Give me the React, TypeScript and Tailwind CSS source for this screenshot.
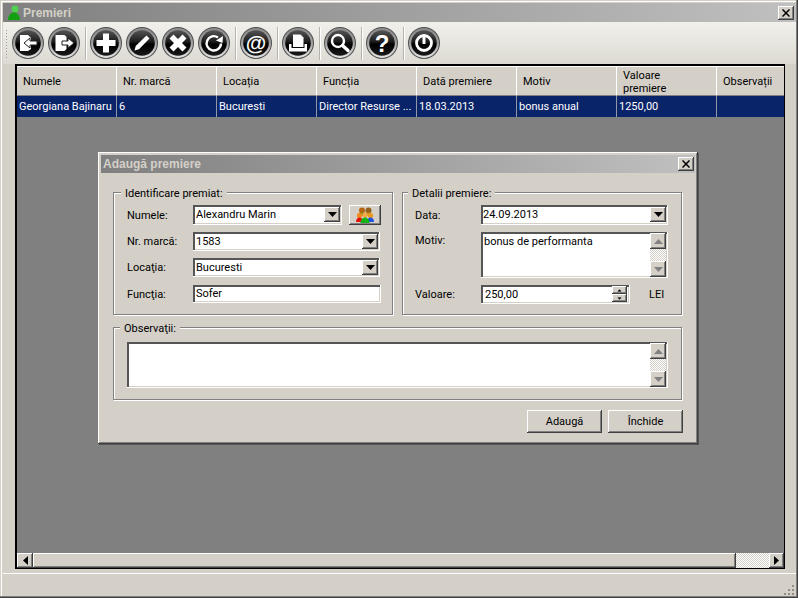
import { ReactNode } from 'react';

const columns = [
  { title: 'Numele', value: 'Georgiana Bajinaru' },
  { title: 'Nr. marcă', value: '6' },
  { title: 'Locația', value: 'Bucuresti' },
  { title: 'Funcția', value: 'Director Resurse ...' },
  { title: 'Dată premiere', value: '18.03.2013' },
  { title: 'Motiv', value: 'bonus anual' },
  { title: 'Valoare premiere', value: '1250,00' },
  { title: 'Observații', value: '' },
];

const raised = 'bg-[#d4d0c8] shadow-[inset_-1px_-1px_#404040,inset_1px_1px_#ffffff,inset_-2px_-2px_#808080]';
const sunken = 'bg-white shadow-[inset_2px_2px_#555555,inset_-1px_-1px_#d4d0c8] border-r border-b border-white';
const checker = 'bg-[conic-gradient(#d4d0c8_25%,#ffffff_0_50%,#d4d0c8_0_75%,#ffffff_0)] bg-[length:2px_2px]';

function ToolButton({ children, id }: { children: ReactNode; id: string }) {
  return (
    <svg width="32" height="32" viewBox="0 0 32 32" className="shrink-0">
      <defs>
        <linearGradient id={`ring-${id}`} x1="0" y1="0" x2="0" y2="1">
          <stop offset="0" stopColor="#8a8a8a" />
          <stop offset="0.5" stopColor="#a0a0a0" />
          <stop offset="1" stopColor="#e6e6e6" />
        </linearGradient>
        <linearGradient id={`disc-${id}`} x1="0" y1="0" x2="0" y2="1">
          <stop offset="0" stopColor="#555555" />
          <stop offset="0.45" stopColor="#1c1c1c" />
          <stop offset="0.55" stopColor="#000000" />
          <stop offset="1" stopColor="#1a1a1a" />
        </linearGradient>
      </defs>
      <circle cx="16" cy="16" r="16" fill="#505050" />
      <circle cx="16" cy="16" r="15" fill={`url(#ring-${id})`} />
      <circle cx="16" cy="16" r="12.800" fill={`url(#disc-${id})`} />
      {children}
    </svg>
  );
}

const Sep = () => <div className="ml-[1px] mr-[-1px] h-[33px] w-[2px] shrink-0 border-l border-r border-l-[#b5b3ab] border-r-white" />;

function Toolbar() {
  return (
    <div className="flex h-[42px] shrink-0 items-center gap-[4px] bg-gradient-to-b from-[#f1f0eb] to-[#dcdad2] pl-[2px]">
      <div className="h-[29px] w-[3px] bg-[radial-gradient(circle,#9a9890_1px,transparent_1px)] bg-[length:3px_3px]" />
      <ToolButton id="a">
        <path d="M8 8h8l3 3v11l-3 2H8z" fill="#fff" />
        <path d="M12 16l6-5v3h7v4h-7v3z" fill="#fff" stroke="#222" strokeWidth="1" />
      </ToolButton>
      <ToolButton id="b">
        <path d="M7.500 8h9l2 2v12l-2 2h-9z" fill="#fff" />
        <path d="M26 16l-6-5v3h-6v4h6v3z" fill="#fff" stroke="#222" strokeWidth="1" />
      </ToolButton>
      <Sep />
      <ToolButton id="c">
        <path d="M13 6.500h6V13h6.500v6H19v6.500h-6V19H6.500v-6H13z" fill="#fff" />
      </ToolButton>
      <ToolButton id="d">
        <path d="M8.500 23.500l1.200-4.500L20.500 8.500l3 3L13 22.300z" fill="#fff" />
      </ToolButton>
      <ToolButton id="e">
        <path d="M11.500 7.500l4.500 4.500 4.500-4.500 4 4-4.500 4.500 4.500 4.500-4 4-4.500-4.500-4.500 4.500-4-4 4.500-4.500-4.500-4.500z" fill="#fff" />
      </ToolButton>
      <ToolButton id="f">
        <path d="M23 16.500a7.200 7.200 0 1 1-3-6" fill="none" stroke="#fff" strokeWidth="2.400" />
        <path d="M25 9l-.5 7-6.500-2.500z" fill="#fff" />
      </ToolButton>
      <Sep />
      <ToolButton id="g">
        <text x="16" y="22.500" textAnchor="middle" fontFamily="'Liberation Sans', sans-serif" fontSize="21" fontWeight="700" fill="#fff">@</text>
      </ToolButton>
      <Sep />
      <ToolButton id="h">
        <path d="M11 7.500h7.500l3 3V20H11z" fill="#fff" />
        <path d="M7 17h2.500v4h13v-4H25v7.500H7z" fill="#fff" />
      </ToolButton>
      <Sep />
      <ToolButton id="i">
        <circle cx="14" cy="14" r="6" fill="none" stroke="#fff" strokeWidth="2.400" />
        <path d="M18.500 18.500l5.500 5" stroke="#fff" strokeWidth="3.400" strokeLinecap="round" />
      </ToolButton>
      <Sep />
      <ToolButton id="j">
        <text x="16" y="24.500" textAnchor="middle" fontFamily="'Liberation Sans', sans-serif" fontSize="24" fontWeight="700" fill="#fff">?</text>
      </ToolButton>
      <Sep />
      <ToolButton id="k">
        <circle cx="16" cy="16" r="7.500" fill="none" stroke="#fff" strokeWidth="2.800" />
        <path d="M16 10v7" stroke="#fff" strokeWidth="3" />
      </ToolButton>
    </div>
  );
}

function Arrow({ dir, color = 'black' }: { dir: 'up' | 'down' | 'left' | 'right'; color?: string }) {
  const points = { up: '0,5 9,5 4.500,0', down: '0,0 9,0 4.500,5', left: '5,0 5,9 0,4.500', right: '0,0 0,9 5,4.500' }[dir];
  const vertical = dir === 'up' || dir === 'down';
  return (
    <svg width={vertical ? 9 : 5} height={vertical ? 5 : 9}>
      <polygon points={points} fill={color} />
    </svg>
  );
}

function ArrowBtn({ dir, color, className }: { dir: 'up' | 'down' | 'left' | 'right'; color?: string; className: string }) {
  return (
    <div className={`flex shrink-0 items-center justify-center ${raised} ${className}`}>
      <Arrow dir={dir} color={color} />
    </div>
  );
}

function Close() {
  return (
    <div className={`flex h-[14px] w-[16px] items-center justify-center ${raised}`}>
      <svg width="8" height="8" viewBox="0 0 8 8">
        <path d="M0.500 0.500l7 7M7.500 0.500l-7 7" stroke="black" strokeWidth="1.500" />
      </svg>
    </div>
  );
}

function Combo({ value, className }: { value: string; className: string }) {
  return (
    <div className={`flex items-center justify-between pr-[1px] ${sunken} ${className}`}>
      <span>{value}</span>
      <ArrowBtn dir="down" className="h-[15px] w-[16px]" />
    </div>
  );
}

function Group({ title, className, legend, children }: { title: string; className: string; legend: string; children: ReactNode }) {
  return (
    <div className={`relative border border-[#808080] shadow-[1px_1px_#ffffff,inset_1px_1px_#ffffff] ${className}`}>
      <span className={`absolute top-[-6px] bg-[#d4d0c8] px-[4px] leading-[13px] ${legend}`}>{title}</span>
      {children}
    </div>
  );
}

function VScroll() {
  return (
    <div className="flex w-[16px] shrink-0 flex-col">
      <ArrowBtn dir="up" color="#808080" className="h-[16px]" />
      <div className={`flex-1 ${checker}`} />
      <ArrowBtn dir="down" color="#808080" className="h-[16px]" />
    </div>
  );
}

function Dialog() {
  return (
    <div className="absolute left-[98px] top-[152px] flex h-[292px] w-[600px] flex-col bg-[#d4d0c8] p-[3px] shadow-[inset_-1px_-1px_#404040,inset_1px_1px_#ffffff,inset_-2px_-2px_#808080,1px_1px_#555555]">
      <div className="flex h-[18px] shrink-0 items-center justify-between bg-gradient-to-r from-[#808080] to-[#c0c0c0] pl-[2px] pr-[1px]">
        <span className="font-['Liberation_Sans',sans-serif] text-[12px] font-bold text-[#d4d0c8]">Adaugă premiere</span>
        <Close />
      </div>
      <div className="mt-[19px] flex gap-[9px] pl-[12px]">
        <Group title="Identificare premiat:" legend="left-[7px]" className="h-[123px] w-[280px] pl-[13px] pt-[12px]">
          <div className="flex flex-col gap-[7px]">
            <div className="flex h-[20px] items-center">
              <span className="w-[66px]">Numele:</span>
              <Combo value="Alexandru Marin" className="h-[20px] w-[149px] pl-[3px]" />
              <div className={`ml-[7px] flex h-[20px] w-[32px] items-center justify-center ${raised}`}>
                <svg width="18" height="16" viewBox="0 0 18 16">
                  <circle cx="6" cy="3.500" r="3" fill="#b8640f" />
                  <circle cx="12.500" cy="3.500" r="3" fill="#96601c" />
                  <path d="M2 9c0-3 2-3.500 4-3.500S10 6 10 9z" fill="#7c9a1e" />
                  <path d="M9 9c0-3 1.500-3.500 3.500-3.500S16 6 16 9z" fill="#c89318" />
                  <circle cx="3.500" cy="8.500" r="2.600" fill="#f08a1c" />
                  <circle cx="14.500" cy="8.500" r="2.600" fill="#e8981c" />
                  <circle cx="9" cy="8" r="2.600" fill="#f6a848" />
                  <path d="M0 15c0-3 1.500-4.500 3.500-4.500S7 12 7 15z" fill="#e3100c" />
                  <path d="M11 15c0-3 1.500-4.500 3.500-4.500S18 12 18 15z" fill="#1f52e0" />
                  <path d="M4.500 16c0-3.500 2.500-5.500 4.500-5.500s4.500 2 4.500 5.500z" fill="#14b414" />
                </svg>
              </div>
            </div>
            <div className="flex h-[19px] items-center">
              <span className="w-[66px]">Nr. marcă:</span>
              <Combo value="1583" className="h-[19px] w-[187px] pl-[3px]" />
            </div>
            <div className="flex h-[19px] items-center">
              <span className="w-[66px]">Locaţia:</span>
              <Combo value="Bucuresti" className="h-[19px] w-[187px] pl-[3px]" />
            </div>
            <div className="mt-[1px] flex h-[18px] items-center">
              <span className="w-[66px]">Funcţia:</span>
              <div className={`flex h-[18px] w-[188px] items-center pl-[3px] ${sunken}`}>Sofer</div>
            </div>
          </div>
        </Group>
        <Group title="Detalii premiere:" legend="left-[5px]" className="h-[123px] w-[280px] pl-[12px] pt-[12px]">
          <div className="flex flex-col gap-[7px]">
            <div className="flex h-[20px] items-center">
              <span className="w-[66px]">Data:</span>
              <Combo value="24.09.2013" className="h-[20px] w-[187px] pl-[2px]" />
            </div>
            <div className="flex h-[46px]">
              <span className="w-[66px] pt-[3px]">Motiv:</span>
              <div className={`flex w-[187px] justify-between pl-[3px] pr-[1px] pt-[1px] ${sunken}`}>
                <span className="pt-[3px]">bonus de performanta</span>
                <VScroll />
              </div>
            </div>
            <div className="flex h-[19px] items-center">
              <span className="w-[66px]">Valoare:</span>
              <div className={`flex h-[19px] w-[149px] items-center justify-between pl-[4px] pr-[2px] ${sunken}`}>
                <span className="pt-[1px]">250,00</span>
                <div className="flex w-[15px] flex-col">
                  <ArrowBtn dir="up" className="h-[8px] [&_svg]:scale-50" />
                  <ArrowBtn dir="down" className="h-[8px] [&_svg]:scale-50" />
                </div>
              </div>
              <span className="ml-[19px]">LEI</span>
            </div>
          </div>
        </Group>
      </div>
      <div className="ml-[12px] mt-[12px]">
        <Group title="Observaţii:" legend="left-[6px]" className="h-[73px] w-[569px] pl-[13px] pt-[14px]">
          <div className={`flex h-[46px] w-[541px] justify-end pr-[1px] pt-[1px] ${sunken}`}>
            <VScroll />
          </div>
        </Group>
      </div>
      <div className="ml-[426px] mt-[10px] flex gap-[6px]">
        <div className={`flex h-[23px] w-[75px] items-center justify-center ${raised}`}>Adaugă</div>
        <div className={`flex h-[23px] w-[75px] items-center justify-center ${raised}`}>Închide</div>
      </div>
    </div>
  );
}

export default function App() {
  return (
    <div className="relative flex h-[598px] w-[798px] flex-col overflow-hidden bg-[#d4d0c8] pb-[2px] pl-[3px] pr-[2px] pt-[3px] font-['Roboto',sans-serif] text-[11px] leading-none text-black shadow-[inset_-1px_-1px_#404040,inset_-2px_-2px_#808080,inset_1px_1px_#d4d0c8,inset_2px_2px_#ffffff]">
      {/* Title bar */}
      <div className="flex h-[19px] shrink-0 items-center justify-between bg-gradient-to-r from-[#808080] to-[#c0c0c0] pl-[4px] pr-[2px]">
        <div className="flex items-center gap-[2px]">
          <svg width="14" height="16" viewBox="0 0 14 16">
            <circle cx="8" cy="4" r="3.500" fill="#4fd04f" />
            <path d="M1 15c0-5 3-7.500 6-7.500s6 2.500 6 7.500z" fill="#12a012" />
          </svg>
          <span className="font-['Liberation_Sans',sans-serif] text-[12px] font-bold text-[#d4d0c8]">Premieri</span>
        </div>
        <Close />
      </div>

      <Toolbar />

      {/* Table */}
      <div className="ml-[12px] mr-[11px] flex min-h-0 flex-1 flex-col border-b border-l-2 border-r border-t-2 border-black bg-[#808080]">
        <div className="flex h-[30px] shrink-0 overflow-hidden bg-[#d4d0c8]">
          {columns.map((c) => (
            <div key={c.title} className="flex w-[100px] shrink-0 items-center border-b border-r border-b-[#808080] border-r-white pl-[6px] pt-[2px] shadow-[inset_0_1px_#ffffff] leading-[13px]">
              <span className={c.title === 'Valoare premiere' ? 'w-[60px]' : ''}>{c.title}</span>
            </div>
          ))}
        </div>
        <div className="flex h-[21px] shrink-0 overflow-hidden bg-[#0a246a] text-white">
          {columns.map((c) => (
            <div key={c.title} className="flex w-[100px] shrink-0 items-center border-r border-[#8f97a8] pl-[2px]">
              {c.value}
            </div>
          ))}
        </div>
        <div className="flex-1" />
        <div className="flex h-[15px] shrink-0">
          <ArrowBtn dir="left" className="w-[16px]" />
          <div className={`flex-1 ${raised}`} />
          <div className={`w-[33px] ${checker}`} />
          <ArrowBtn dir="right" className="w-[15px]" />
        </div>
      </div>

      {/* Status bar */}
      <div className="relative mt-[4px] h-[23px] shrink-0 border-t border-white">
        <svg width="12" height="12" className="absolute bottom-[0px] right-[1px]">
          <g fill="#8f8d85">
            <rect x="9" y="1" width="2" height="2" />
            <rect x="5" y="5" width="2" height="2" />
            <rect x="9" y="5" width="2" height="2" />
            <rect x="1" y="9" width="2" height="2" />
            <rect x="5" y="9" width="2" height="2" />
            <rect x="9" y="9" width="2" height="2" />
          </g>
        </svg>
      </div>

      <Dialog />
    </div>
  );
}
